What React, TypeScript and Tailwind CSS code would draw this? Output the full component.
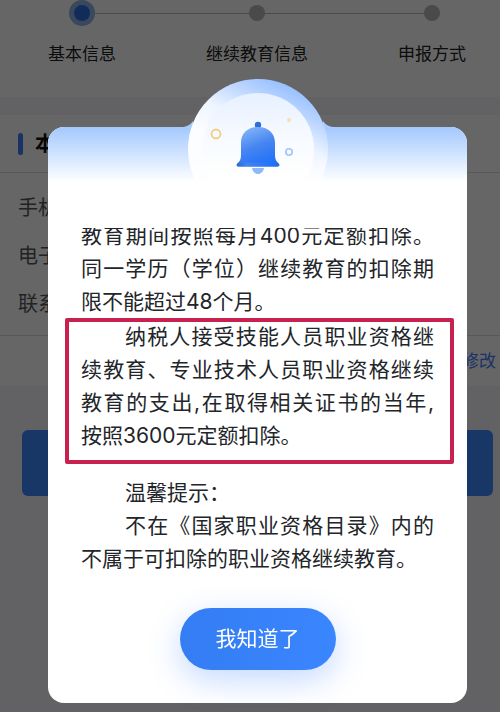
import React from "react";

const STEPS = [
    { label: "基本信息", active: true },
    { label: "继续教育信息", active: false },
    { label: "申报方式", active: false },
];

const FIELDS = ["手机", "电子", "联系"];

function Stepper() {
    return (
        <div className="relative bg-white h-[97px]">
            <div className="absolute top-[13px] left-[82px] right-[68px] h-px bg-[#b8b8be]" />
            <ol className="relative flex justify-between pl-[22px] pr-2">
                {STEPS.map((step) => (
                    <li key={step.label} className="w-[120px] flex flex-col items-center">
                        <div className="h-[26px] flex items-center">
                            {step.active ? (
                                <span className="block w-[26px] h-[26px] rounded-full bg-[#2f6fe0] border-[5px] border-[#8fb4e6]" />
                            ) : (
                                <span className="block w-4 h-4 rounded-full bg-[#b8b8be]" />
                            )}
                        </div>
                        <span className="mt-4 text-[17px] leading-6 whitespace-nowrap text-[#222]">{step.label}</span>
                    </li>
                ))}
            </ol>
        </div>
    );
}

function BasicInfo() {
    return (
        <>
            <section className="mt-[18px] bg-white">
                <div className="h-[58px] px-[18px] flex items-center gap-3 border-b border-[#dedede]">
                    <span className="w-[5px] h-[22px] rounded-full bg-[#3f80ff]" />
                    <h2 className="text-[20px] font-bold text-[#111]">本人</h2>
                </div>
                <div className="pt-[11px] pb-[7px] px-[18px] border-b border-[#dedede]">
                    {FIELDS.map((field) => (
                        <div key={field} className="h-12 flex items-center text-[20px] text-[#555]">
                            {field}
                        </div>
                    ))}
                </div>
                <div className="h-[50px] pt-0.5 pr-1 flex items-center justify-end">
                    <a href="#edit" className="text-[17px] text-[#3f80ff]">修改</a>
                </div>
            </section>
            <div className="mt-[44px] pl-[22px] pr-[7px]">
                <button type="button" aria-label="下一步" className="block w-full h-[66px] rounded-md bg-[#3f8aff]" />
            </div>
        </>
    );
}

function BellBadge() {
    return (
        <svg className="absolute -top-12 left-1/2 -translate-x-1/2" width="168" height="140" viewBox="0 0 168 140" fill="none" aria-hidden="true">
            <defs>
                <linearGradient id="halo" x1="112" y1="0" x2="76" y2="76" gradientUnits="userSpaceOnUse">
                    <stop offset="0" stopColor="#8fbcff" />
                    <stop offset="0.3" stopColor="#b9d4ff" />
                    <stop offset="0.65" stopColor="#eef5ff" />
                    <stop offset="1" stopColor="#fbfdff" />
                </linearGradient>
                <linearGradient id="disc" x1="84" y1="14" x2="84" y2="90" gradientUnits="userSpaceOnUse">
                    <stop offset="0" stopColor="#e6f0ff" />
                    <stop offset="0.5" stopColor="#f5f9ff" />
                    <stop offset="1" stopColor="#fdfeff" />
                </linearGradient>
                <linearGradient id="fade" x1="0" y1="76" x2="0" y2="110" gradientUnits="userSpaceOnUse">
                    <stop offset="0" stopColor="#fff" stopOpacity="0" />
                    <stop offset="1" stopColor="#fff" />
                </linearGradient>
                <linearGradient id="bell" x1="74" y1="50" x2="88" y2="86" gradientUnits="userSpaceOnUse">
                    <stop offset="0" stopColor="#7fb0f8" />
                    <stop offset="0.5" stopColor="#4585f0" />
                    <stop offset="1" stopColor="#2272fa" />
                </linearGradient>
                <linearGradient id="rim" x1="62" y1="0" x2="106" y2="0" gradientUnits="userSpaceOnUse">
                    <stop offset="0" stopColor="#2d66c9" />
                    <stop offset="0.25" stopColor="#4584ee" />
                    <stop offset="0.8" stopColor="#2272fa" />
                    <stop offset="1" stopColor="#2c6bd6" />
                </linearGradient>
            </defs>
            <path d="M6 48.5C13 48 16 46 19 42V49H6Z" fill="#a9cbff" />
            <path d="M162 48.5C155 48 152 46 149 42V49H162Z" fill="#a9cbff" />
            <circle cx="84" cy="70" r="70" fill="url(#halo)" />
            <circle cx="84" cy="70" r="56" fill="url(#disc)" />
            <circle cx="84" cy="70" r="70" fill="url(#fade)" />
            <circle cx="42" cy="55" r="4.5" stroke="#f2cd84" strokeWidth="1.8" />
            <circle cx="115" cy="41" r="2" fill="#f7dfae" />
            <circle cx="115" cy="73" r="3.2" stroke="#9fc5fb" strokeWidth="1.6" />
            <path d="M78 89H90C89.5 92.5 87 95 84 95S78.5 92.5 78 89Z" fill="#8fbaf8" />
            <circle cx="84" cy="46" r="3.2" fill="#2f6fd8" />
            <path d="M63 85C66 82 67 80 67 76V64C67 54 74 48 84 48S101 54 101 64V76C101 80 102 82 105 85C106 87 105 87.5 103 87.5H65C63 87.5 62 87 63 85Z" fill="url(#bell)" />
            <path d="M64.5 83.5H103.5C106 86 106 87.5 103 87.5H65C62 87.5 62 86 64.5 83.5Z" fill="url(#rim)" />
        </svg>
    );
}

function NoticeDialog() {
    return (
        <div className="fixed inset-0 bg-black/60 pt-[127px] pl-12 pr-[33px]">
            <div role="dialog" aria-modal="true" aria-label="温馨提示" className="relative rounded-2xl bg-white">
                <div className="h-[55px] rounded-t-2xl bg-linear-to-b from-[#a3c8ff] to-white" />
                <BellBadge />

                <div className="mt-[46px] px-[33px] overflow-hidden text-[21px] leading-[33px] text-justify text-[#222529]">
                    <p className="-mt-[9px]">教育期间按照每月400元定额扣除。同一学历（学位）继续教育的扣除期限不能超过48个月。</p>
                    <div className="relative mt-0.5 mb-6">
                        <p className="indent-11">
                            纳税人接受技能人员职业资格继续教育、专业技术人员职业资格继续教育的支出,在取得相关证书的当年,<span className="whitespace-nowrap">按照</span>3600元定额扣除。
                        </p>
                        <div className="absolute -left-4 -right-5 -top-0.5 -bottom-3 border-4 border-[#c8204f] rounded-xs" />
                    </div>
                    <p className="indent-11">温馨提示：</p>
                    <p className="indent-11">不在《国家职业资格目录》内的不属于可扣除的职业资格继续教育。</p>
                </div>

                <div className="flex justify-center py-[33px]">
                    <button type="button" className="w-[156px] h-[62px] rounded-full bg-linear-to-r from-[#347df3] to-[#3a86ff] text-[21px] text-white shadow-[0_10px_32px_rgba(58,130,255,0.3)]">
                        我知道了
                    </button>
                </div>
            </div>
        </div>
    );
}

export default function App() {
    return (
        <main lang="zh-CN" className="min-h-screen bg-[#f5f5f9] font-[Inter,'Noto_Sans_CJK_SC',sans-serif]">
            <Stepper />
            <BasicInfo />
            <NoticeDialog />
        </main>
    );
}
